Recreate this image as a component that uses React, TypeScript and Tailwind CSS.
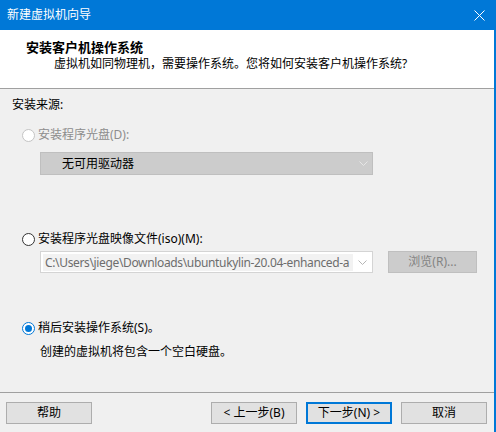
import { ReactNode } from "react";

const font = "font-['Noto_Sans','Noto_Sans_CJK_SC',sans-serif]";

const Radio = ({ state }: { state: "disabled" | "off" | "on" }) => {
    if (state === "on")
        return (
            <span className="w-[13px] h-[13px] rounded-full border border-[#0078d7] bg-white flex items-center justify-center shrink-0">
                <span className="w-[7px] h-[7px] rounded-full bg-[#0078d7]" />
            </span>
        );
    return (
        <span
            className={
                state === "disabled"
                    ? "w-[13px] h-[13px] rounded-full border border-[#c4c4c4] bg-white shrink-0"
                    : "w-[13px] h-[13px] rounded-full border border-[#333333] bg-white shrink-0"
            }
        />
    );
};

const Chevron = ({ color }: { color: string }) => (
    <svg width="9" height="5" viewBox="0 0 9 5" className="shrink-0">
        <path d="M0.5 0.5 L4.5 4.5 L8.5 0.5" fill="none" stroke={color} strokeWidth="1" />
    </svg>
);

const Button = ({ children, primary }: { children: ReactNode; primary?: boolean }) => (
    <button
        className={
            primary
                ? "w-[86px] h-[22px] bg-[#e1e1e1] border-2 border-[#0078d7] text-[12px] leading-[16px] text-black flex items-center justify-center"
                : "w-[86px] h-[22px] bg-[#e1e1e1] border border-[#adadad] text-[12px] leading-[16px] text-black flex items-center justify-center"
        }>
        {children}
    </button>
);

const App = () => {
    return (
        <div className={`${font} w-[496px] h-[432px] flex flex-col bg-[#f0f0f0] border-r-2 border-[#0078d7] overflow-hidden text-[12px] leading-[16px] text-black`}>
            {/* Title bar */}
            <div className="h-[30px] bg-[#0078d7] flex items-center justify-between pl-[7px] pr-[9px] shrink-0">
                <span className="text-white text-[12px]">新建虚拟机向导</span>
                <svg width="11" height="11" viewBox="0 0 11 11">
                    <path d="M0.5 0.5 L10.5 10.5 M10.5 0.5 L0.5 10.5" stroke="#ffffff" strokeWidth="1" />
                </svg>
            </div>

            {/* Header */}
            <div className="h-[59px] bg-white border-b border-[#a0a0a0] pt-[9px] shrink-0">
                <p className="pl-[26px] text-[13px] leading-[16px] font-bold">安装客户机操作系统</p>
                <p className="pl-[54px] mt-[1px]">虚拟机如同物理机，需要操作系统。您将如何安装客户机操作系统?</p>
            </div>

            {/* Body */}
            <div className="flex-1 flex flex-col pl-[12px]">
                <p className="mt-[8px]">安装来源:</p>

                <div className="mt-[14px] ml-[10px] flex items-center gap-[3px] text-[#8d8d8d]">
                    <Radio state="disabled" />
                    <span>安装程序光盘(D):</span>
                </div>
                <div className="mt-[9px] ml-[28px] w-[333px] h-[23px] bg-[#cccccc] border border-[#bfbfbf] flex items-center justify-between pl-[21px] pr-[4px]">
                    <span>无可用驱动器</span>
                    <Chevron color="#e6e6e6" />
                </div>

                <div className="mt-[56px] ml-[10px] flex items-center gap-[3px]">
                    <Radio state="off" />
                    <span>安装程序光盘映像文件(iso)(M):</span>
                </div>
                <div className="mt-[4px] ml-[28px] flex items-center gap-[15px]">
                    <div className="w-[333px] h-[22px] bg-white border border-[#d4d4d4] flex items-center pl-[2px] pr-[5px]">
                        <div className="w-[310px] h-[17px] bg-[#f2f2f2] overflow-hidden whitespace-nowrap pl-[2px] text-[#6d6d6d] leading-[17px] tracking-[-0.35px]">
                            C:\Users\jiege\Downloads\ubuntukylin-20.04-enhanced-a
                        </div>
                        <div className="flex-1 flex justify-end">
                            <Chevron color="#b5b5b5" />
                        </div>
                    </div>
                    <div className="w-[89px] h-[22px] bg-[#cccccc] border border-[#bfbfbf] flex items-center justify-center text-[#838383]">
                        浏览(R)...
                    </div>
                </div>

                <div className="mt-[47px] ml-[10px] flex items-center gap-[3px]">
                    <Radio state="on" />
                    <span>稍后安装操作系统(S)。</span>
                </div>
                <p className="mt-[8px] ml-[28px]">创建的虚拟机将包含一个空白硬盘。</p>
            </div>

            {/* Footer */}
            <div className="border-t border-[#a0a0a0] pt-[9px] pb-[8px] pl-[6px] pr-[7px] flex items-center shrink-0">
                <Button>帮助</Button>
                <div className="flex-1" />
                <div className="flex gap-[9px]">
                    <Button>&lt; 上一步(B)</Button>
                    <Button primary>下一步(N) &gt;</Button>
                    <Button>取消</Button>
                </div>
            </div>
        </div>
    );
};

export default App;
